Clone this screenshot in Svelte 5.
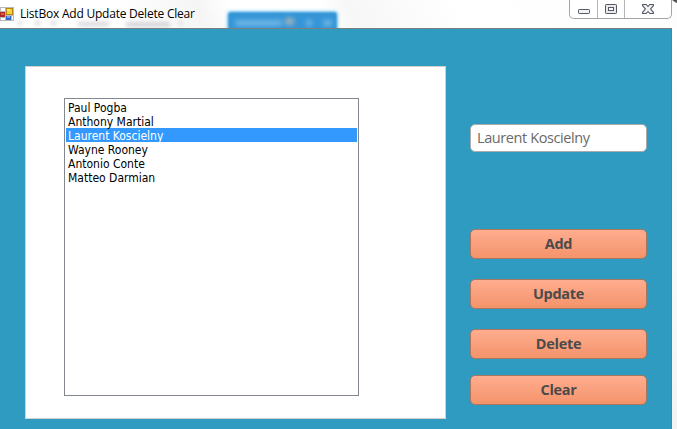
<script>
  let players = $state(['Paul Pogba', 'Anthony Martial', 'Laurent Koscielny', 'Wayne Rooney', 'Antonio Conte', 'Matteo Darmian']);
  let selected = $state(2);
  let name = $state('Laurent Koscielny');

  function pick(i) {
    selected = i;
    name = players[i];
  }
  function add() {
    if (name) players.push(name);
  }
  function update() {
    if (selected >= 0) players[selected] = name;
  }
  function remove() {
    if (selected >= 0) players.splice(selected, 1);
    selected = -1;
  }
  function clear() {
    players = [];
    selected = -1;
  }
</script>

<div class="window">
  <header>
    <div class="glass">
      <i class="smudge s1"></i><i class="smudge s2"></i><i class="smudge s3"></i>
      <i class="smudge s4"></i><i class="smudge s5"></i><i class="smudge s6"></i>
      <div class="tab"><i class="t1"></i><i class="t2"></i><i class="t3"></i><i class="t4"></i></div>
      <i class="pointer"></i>
    </div>
    <svg class="appicon" width="14" height="14" viewBox="0 0 14 14" shape-rendering="crispEdges">
      <rect width="14" height="14" fill="#b9b9b9" />
      <rect x="1" y="1" width="4" height="3" fill="#fff" />
      <rect x="0" y="5" width="5" height="5" fill="#b02a22" />
      <rect x="1" y="6" width="3" height="2" fill="#dc5547" />
      <rect x="6" y="1" width="7" height="7" fill="#b8860f" />
      <rect x="7" y="2" width="5" height="5" fill="#f8cf3d" />
      <rect x="7" y="2" width="3" height="2" fill="#ffe27c" />
      <rect x="6" y="9" width="5" height="4" fill="#3567c6" />
      <rect x="7" y="9" width="3" height="2" fill="#75a2ee" />
      <rect x="1" y="11" width="4" height="2" fill="#fff" />
      <rect x="12" y="9" width="1" height="4" fill="#fff" />
    </svg>
    <span class="title">ListBox Add Update Delete Clear</span>
    <div class="caption">
      <span class="min"><svg width="12" height="5" viewBox="0 0 12 5"><rect x=".5" y=".5" width="11" height="4" rx=".7" fill="#f4f4f4" stroke="#555866" /></svg></span>
      <span class="max"><svg width="12" height="10" viewBox="0 0 12 10"><rect x=".5" y=".5" width="11" height="9" rx=".7" fill="#e9e9e9" stroke="#555866" /><rect x="3.5" y="3.5" width="5" height="3" fill="#fff" stroke="#555866" /></svg></span>
      <span class="close"><svg width="12" height="11" viewBox="0 0 12 11"><path d="M.6 .5H4.2L6 2.5 7.8 .5h3.6v1.2L8.6 5l2.8 3.3v1.2H7.8L6 7.5 4.2 9.5H.6V8.3L3.4 5 .6 1.7z" fill="#f2f2f2" stroke="#555866" stroke-width="1.1" /></svg></span>
    </div>
  </header>
  <div class="body">
    <main>
      <section>
        <ul>
          {#each players as player, i}
            <li class:selected={i === selected}><button class="row" onclick={() => pick(i)}>{player}</button></li>
          {/each}
        </ul>
      </section>
      <aside>
        <input bind:value={name} spellcheck="false" />
        <div class="actions">
          <button class="action" onclick={add}>Add</button>
          <button class="action" onclick={update}>Update</button>
          <button class="action" onclick={remove}>Delete</button>
          <button class="action last" onclick={clear}>Clear</button>
        </div>
      </aside>
    </main>
  </div>
</div>

<style>
  :global(body) { overflow: hidden; background: #fafafa; }
  * { box-sizing: border-box; }
  .window { width: 677px; height: 429px; display: flex; flex-direction: column; overflow: hidden; }
  header {
    position: relative; height: 28px; flex: none; display: flex; align-items: flex-start;
    background: linear-gradient(65deg, #fff 0 18%, #f5f5f5 30%, #fff 35% 48%, #f7f7f7 52%, #fff 68%, #fdfdfd);
  }
  .glass { position: absolute; inset: 0; overflow: hidden; }
  .smudge { position: absolute; top: 21px; height: 4px; background: #b8b8c0; filter: blur(2px); opacity: .6; }
  .s1 { left: 18px; width: 4px; }
  .s2 { left: 35px; width: 5px; }
  .s3 { left: 51px; width: 5px; }
  .s4 { left: 78px; width: 31px; top: 22px; }
  .s5 { left: 126px; width: 44px; top: 22px; height: 5px; }
  .s6 { left: 179px; width: 3px; }
  .tab {
    position: absolute; left: 228px; top: 12px; width: 109px; height: 22px; border-radius: 3px;
    background: #3495d7; box-shadow: 0 0 3px 1px #93d5f8; filter: blur(.8px);
  }
  .tab i { position: absolute; top: 8px; height: 6px; background: #8fc9ef; filter: blur(2px); opacity: .65; }
  .tab .t1 { left: 7px; width: 47px; }
  .tab .t2 { left: 57px; width: 9px; top: 6px; height: 7px; background: #d6c0aa; }
  .tab .t3 { left: 78px; width: 6px; }
  .tab .t4 { left: 95px; width: 9px; }
  .pointer { position: absolute; right: -1px; top: -2px; width: 5px; height: 4px; background: #555; filter: blur(.6px); transform: rotate(35deg); }
  .appicon { position: relative; margin-top: 7px; flex: none; }
  .title {
    position: relative; margin: 5px 0 0 6px; flex: none; white-space: pre; color: #000;
    font: 12px/18px "Open Sans", "Noto Sans", sans-serif; letter-spacing: -.22px;
  }
  .caption {
    position: absolute; right: 5px; top: 0; width: 103px; height: 19px; display: flex;
    border: 1px solid #a4a4a6; border-top: 0; border-radius: 0 0 5px 5px; background: #fff;
  }
  .caption span { display: flex; justify-content: center; align-items: flex-start; }
  .min { width: 28px; padding: 9px 0 0 1px; border-right: 1px solid #b5b5b7; }
  .max { width: 27px; padding-top: 4px; border-right: 1px solid #b5b5b7; }
  .close { flex: 1; padding: 4px 0 0; }
  .body { flex: 1; display: flex; background: linear-gradient(#fff, #fafafa 50%, #f3f3f3); }
  main {
    width: 672px; display: flex; align-items: flex-start; background: #2f9bc1;
    border-top: 1px solid #7c7f82; border-right: 1px solid #5e7f90;
  }
  section {
    width: 421px; height: 353px; margin: 37px 0 0 25px; padding: 31px 0 0 38px; flex: none;
    background: #fff; border: 1px solid #d1d1cf;
  }
  ul {
    width: 295px; height: 298px; margin: 0; padding: 1px; list-style: none; background: #fff;
    border: 1px solid #828790;
  }
  li { height: 14px; color: #000; }
  li.selected { background: #3399ff; color: #fff; }
  .row {
    display: block; width: 100%; height: 14px; margin: 0; padding: 1px 0 0 2px; border: 0; background: none;
    color: inherit; text-align: left; white-space: pre;
    font: 12px/14px "DejaVu Sans Condensed", "DejaVu Sans", sans-serif; font-stretch: condensed; letter-spacing: 0;
  }
  aside { width: 177px; margin: 95px 0 0 24px; display: flex; flex-direction: column; }
  input {
    width: 177px; height: 28px; padding: 0 6px 2px; border: 1px solid #a9abac; border-radius: 5px; outline: 0;
    background: #fff; color: #696969; font: 14.5px/20px "Open Sans", "Noto Sans", sans-serif; letter-spacing: -.4px;
  }
  .actions { margin-top: 77px; display: flex; flex-direction: column; gap: 20px; }
  .action {
    width: 177px; height: 30px; padding: 0; border: 1px solid #a8775f; border-radius: 5px;
    background: linear-gradient(#ffad8f, #f4936b); color: #4b4b4b;
    font: bold 14.5px/20px "Open Sans", "Noto Sans", sans-serif; letter-spacing: -.3px;
  }
  .last { margin-top: -4px; }
</style>
